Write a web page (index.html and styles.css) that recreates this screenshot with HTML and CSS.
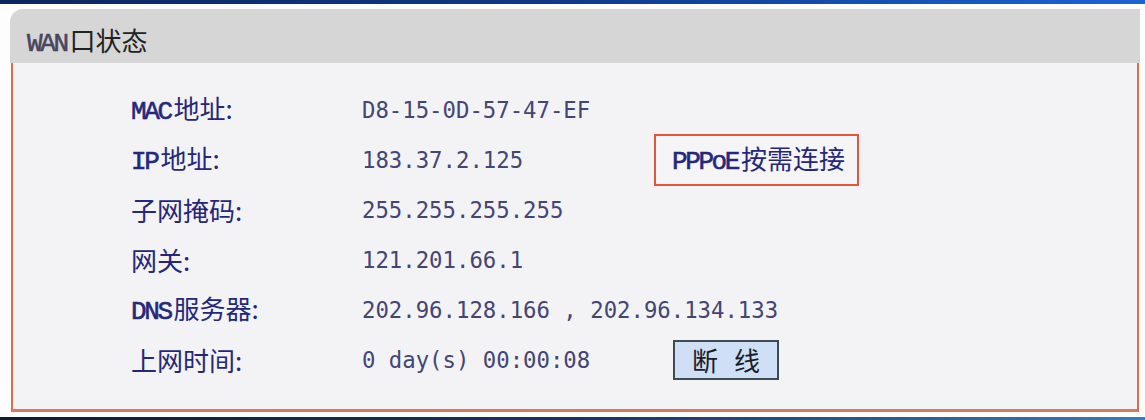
FILE: index.html
```html
<!DOCTYPE html>
<html lang="zh-CN">
<head>
<meta charset="utf-8">
<title>WAN口状态</title>
<link rel="stylesheet" href="styles.css">
</head>
<body>
<div class="topbar"></div>
<div class="panel">
  <div class="panel-head"><span class="serif-mono head-latin">WAN</span>口状态</div>
  <div class="panel-body">
    <div class="grid">
      <div class="label"><span class="serif-mono">MAC</span>地址:</div>
      <div class="value mono">D8-15-0D-57-47-EF</div>
      <div class="extra"></div>

      <div class="label"><span class="serif-mono">IP</span>地址:</div>
      <div class="value mono">183.37.2.125</div>
      <div class="extra"><span class="mode"><span class="serif-mono">PPPoE</span>按需连接</span></div>

      <div class="label">子网掩码:</div>
      <div class="value mono">255.255.255.255</div>
      <div class="extra"></div>

      <div class="label">网关:</div>
      <div class="value mono">121.201.66.1</div>
      <div class="extra"></div>

      <div class="label"><span class="serif-mono">DNS</span>服务器:</div>
      <div class="value mono wide">202.96.128.166 , 202.96.134.133</div>

      <div class="label">上网时间:</div>
      <div class="value mono">0 day(s) 00:00:08</div>
      <div class="extra"><button class="btn" type="button">断 线</button></div>
    </div>
  </div>
</div>
<div class="bottombar"></div>
</body>
</html>
```

FILE: styles.css
```css
html, body {
  margin: 0;
  padding: 0;
}
body {
  width: 1145px;
  height: 420px;
  overflow: hidden;
  background: #fdfdfd;
  font-family: "Noto Sans CJK SC", "DejaVu Sans", sans-serif;
}
.mono {
  font-family: "DejaVu Sans Mono", "Noto Sans CJK SC", monospace;
}
.serif-mono {
  font-family: "Liberation Mono", "Noto Sans CJK SC", monospace;
  font-weight: normal;
  -webkit-text-stroke: 0.6px currentColor;
  font-size: 26px;
  letter-spacing: -2.4px;
  margin-right: 3px;
}
.topbar {
  height: 4px;
  background: linear-gradient(90deg, #0a2660 0%, #0e3a8c 50%, #1a64d6 100%);
}
.panel {
  margin: 5px 5px 0 10px;
}
.panel-head {
  height: 54px;
  box-sizing: border-box;
  background: #d6d6d6;
  border-top-left-radius: 13px;
  padding-left: 17px;
  padding-bottom: 3px;
  display: flex;
  align-items: baseline;
  padding-top: 12px;
  font-size: 26px;
  color: #222;
}
.head-latin {
  color: #4a4660;
}
.panel-body {
  margin: 0 1px 0 1px;
  height: 349px;
  box-sizing: border-box;
  background: #f3f3f5;
  border: 2px solid #e2694a;
  border-top: none;
  border-bottom: 3px solid #d97a5e;
  padding: 22px 0 0 118px;
}
.grid {
  display: grid;
  grid-template-columns: 231px 292px 1fr;
  grid-auto-rows: 50px;
  align-items: center;
}
.label {
  font-size: 26px;
  color: #25287a;
  line-height: 1;
}
.value {
  font-size: 22.3px;
  color: #434574;
  line-height: 1;
  white-space: pre;
}
.value.wide {
  grid-column: 2 / 4;
}
.extra {
  display: flex;
  align-items: center;
}
.mode {
  box-sizing: border-box;
  height: 52px;
  width: 205px;
  border: 2px solid #e2563e;
  background: #f5f4f6;
  display: flex;
  align-items: baseline;
  padding-top: 9px;
  padding-left: 16px;
  font-size: 26px;
  line-height: 1;
  color: #25287a;
}
.btn {
  margin-left: 19px;
  box-sizing: border-box;
  width: 106px;
  height: 40px;
  border: 2px solid #3d4b52;
  background: #cfe0f6;
  font-family: "Noto Sans CJK SC", sans-serif;
  font-size: 26px;
  letter-spacing: 5px;
  padding: 0 0 0 5px;
  color: #1c1c2a;
  line-height: 1;
  white-space: pre;
}
.bottombar {
  margin-top: 5px;
  height: 3px;
  background: linear-gradient(90deg, #0b1c3a 0%, #14345e 50%, #3b7bb4 100%);
}
```
